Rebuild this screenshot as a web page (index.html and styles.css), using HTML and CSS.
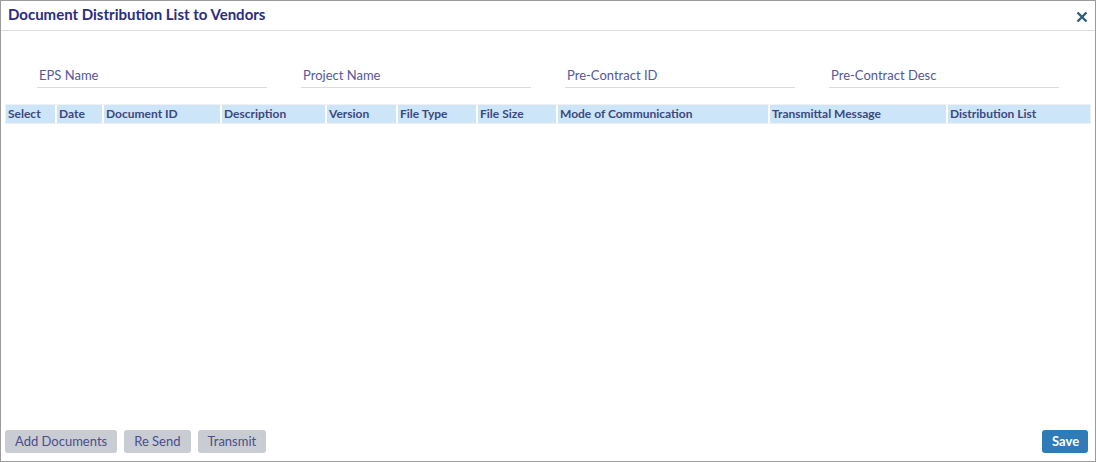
FILE: index.html
```html
<!DOCTYPE html>
<html>
<head>
<meta charset="utf-8">
<link rel="stylesheet" href="styles.css">
</head>
<body>
<div class="dialog">
  <div class="header">
    <div class="title">Document Distribution List to Vendors</div>
    <button class="close" aria-label="Close">
      <svg width="12" height="12" viewBox="0 0 12 12"><path d="M1.5 1.5 L10.5 10.5 M10.5 1.5 L1.5 10.5" stroke="#2f5d7c" stroke-width="2.4" stroke-linecap="butt"/></svg>
    </button>
  </div>
  <div class="fields">
    <div class="field"><span class="label">EPS Name</span></div>
    <div class="field"><span class="label">Project Name</span></div>
    <div class="field"><span class="label">Pre-Contract ID</span></div>
    <div class="field"><span class="label">Pre-Contract Desc</span></div>
  </div>
  <div class="table">
    <div class="thead">
      <div class="th c1">Select</div>
      <div class="th c2">Date</div>
      <div class="th c3">Document ID</div>
      <div class="th c4">Description</div>
      <div class="th c5">Version</div>
      <div class="th c6">File Type</div>
      <div class="th c7">File Size</div>
      <div class="th c8">Mode of Communication</div>
      <div class="th c9">Transmittal Message</div>
      <div class="th c10">Distribution List</div>
    </div>
  </div>
  <div class="spacer"></div>
  <div class="footer">
    <div class="left">
      <button class="btn">Add Documents</button>
      <button class="btn">Re Send</button>
      <button class="btn">Transmit</button>
    </div>
    <button class="btn primary">Save</button>
  </div>
</div>
</body>
</html>
```

FILE: styles.css
```css
html, body {
  margin: 0;
  padding: 0;
  background: #fff;
}
body {
  font-family: Lato, "Open Sans", sans-serif;
}
.dialog {
  box-sizing: border-box;
  width: 1096px;
  height: 462px;
  border: 1px solid #9b9b9b;
  display: flex;
  flex-direction: column;
  background: #fff;
}
.header {
  height: 29px;
  border-bottom: 1px solid #dcdcdc;
  display: flex;
  align-items: center;
  justify-content: space-between;
  padding: 0 7px;
}
.title {
  font-size: 15px;
  font-weight: 700;
  color: #2b2d7c;
  margin-top: -3px;
}
.close {
  border: 0;
  background: none;
  padding: 0;
  width: 12px;
  height: 12px;
  display: flex;
  margin-right: 0;
  margin-top: 2px;
}
.fields {
  display: grid;
  grid-template-columns: repeat(4, 230px);
  column-gap: 34px;
  padding: 34px 0 0 36px;
}
.field {
  height: 22px;
  border-bottom: 1px solid #dcdcdc;
  padding-left: 2px;
}
.label {
  font-size: 13px;
  color: #55589a;
  line-height: 16px;
  display: block;
  margin-top: 2px;
}
.table {
  margin: 16px 0 0 4px;
  width: 1086px;
  border: 1px solid #eef0f2;
  box-sizing: border-box;
}
.thead {
  display: flex;
  height: 18px;
  background: #cce5f8;
}
.th {
  box-sizing: border-box;
  font-size: 12px;
  font-weight: 700;
  color: #3d4880;
  line-height: 18px;
  padding-left: 2px;
  white-space: nowrap;
  border-left: 2px solid #fff;
}
.th.c1 { width: 49px; border-left: 0; padding-left: 2px; }
.th.c2 { width: 47px; }
.th.c3 { width: 118px; }
.th.c4 { width: 105px; }
.th.c5 { width: 71px; }
.th.c6 { width: 80px; }
.th.c7 { width: 80px; }
.th.c8 { width: 212px; }
.th.c9 { width: 178px; }
.th.c10 { flex: 1; }
.spacer {
  flex: 1;
}
.footer {
  display: flex;
  justify-content: space-between;
  align-items: center;
  padding: 0 7px 8px 4px;
}
.left {
  display: flex;
  gap: 7px;
}
.btn {
  font-family: Lato, "Open Sans", sans-serif;
  font-size: 13px;
  height: 23px;
  border: 0;
  border-radius: 3px;
  background: #c9ccd3;
  color: #4b4e8a;
  padding: 0 10px;
  line-height: 23px;
}
.btn.primary {
  background: #2e7bb7;
  color: #fff;
  font-weight: 700;
  padding: 0 10px;
  width: 46px;
}
```
